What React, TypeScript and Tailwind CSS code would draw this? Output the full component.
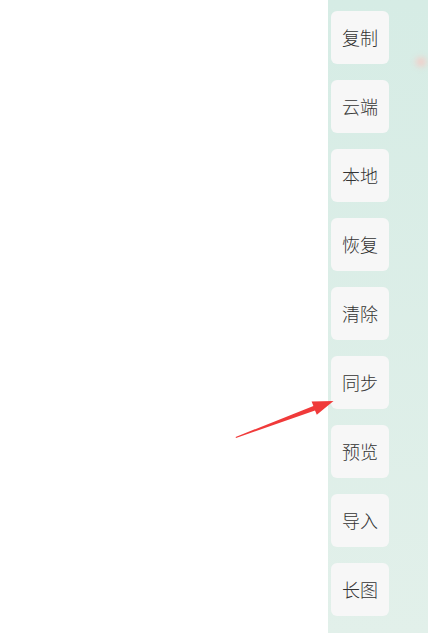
import React from "react";

const items = ["复制", "云端", "本地", "恢复", "清除", "同步", "预览", "导入", "长图"];

export default function App() {
  return (
    <div className="relative flex h-[633px] w-[428px] overflow-hidden bg-white">
      <div className="flex-1" />
      <div className="relative flex w-[100px] flex-col gap-[16px] bg-gradient-to-b from-[#d6ece5] to-[#e2f0ea] pl-[3px] pt-[11px]">
        <div className="absolute right-[2px] top-[58px] h-[8px] w-[10px] rounded-full bg-[#f6c9c4] blur-[3px]" />
        {items.map((t) => (
          <div
            key={t}
            className="relative flex h-[53px] w-[58px] items-center justify-center rounded-[6px] bg-[#f7f7f7] text-[18px] font-light text-[#333] [font-family:'Noto_Sans_CJK_SC',sans-serif]"
          >
            {t}
          </div>
        ))}
      </div>
      <svg className="absolute left-[234px] top-[398px]" width="102" height="44" viewBox="0 0 102 44">
        <polygon
          points="2,40 81,12.4 82.8,16.8 99.5,3 77.6,3.4 79.4,8 1.6,39"
          fill="#f03a3a"
        />
      </svg>
    </div>
  );
}
